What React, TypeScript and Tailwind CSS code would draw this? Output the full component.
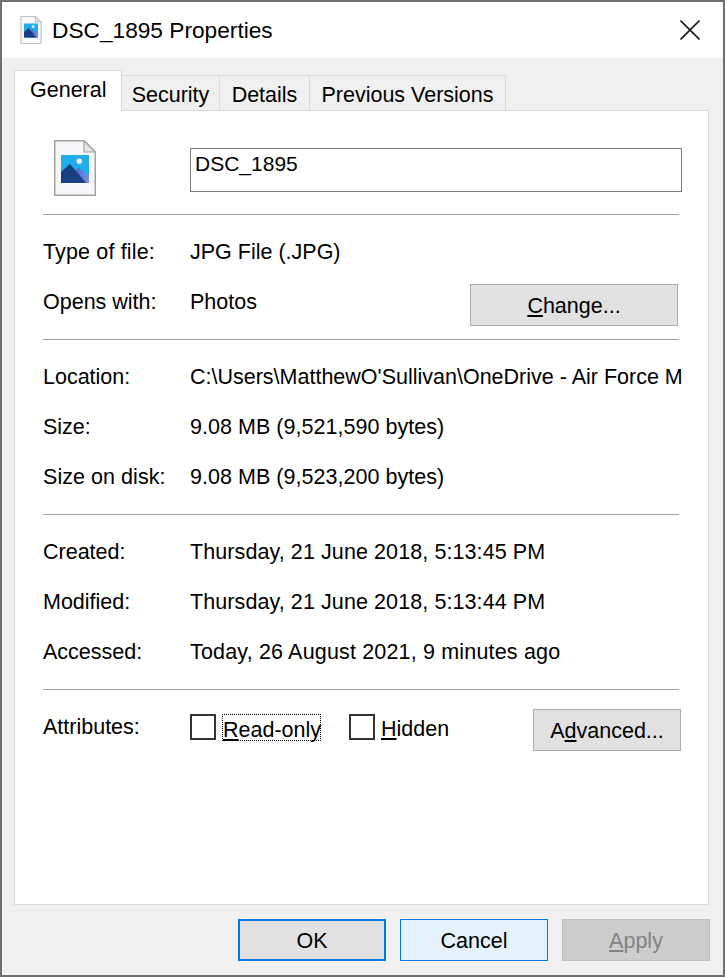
import type { ReactNode } from 'react';

const rowLabel = 'w-[147px] shrink-0';

function FileIcon({ className }: { className: string }) {
  return (
    <svg viewBox="0 0 42 56" className={className}>
      <defs>
        <linearGradient id="backHill" x1="0" y1="0" x2="1" y2="0">
          <stop offset="0" stopColor="#3f63c0" />
          <stop offset="1" stopColor="#7d8fe6" />
        </linearGradient>
      </defs>
      <path d="M0.75 0.75H30L41.25 12V55.25H0.75Z" fill="#f5f7fa" stroke="#a3a3a3" strokeWidth="1.5" />
      <path d="M30 0.75V12H41.25Z" fill="#e4e4e4" stroke="#a3a3a3" strokeWidth="1.2" />
      <rect x="7" y="15" width="28" height="28" fill="#22ace9" />
      <circle cx="25.3" cy="21.3" r="2.7" fill="#e8f4fc" />
      <path d="M19 33L24 28L35 35.5V43H19Z" fill="url(#backHill)" />
      <path d="M7 32L16 24L32 43H7Z" fill="#173f82" />
    </svg>
  );
}

function Row({ label, children, tracking = '', labelTracking = '' }: { label: string; children: ReactNode; tracking?: string; labelTracking?: string }) {
  return (
    <div className="flex h-[50px] items-center">
      <div className={`${rowLabel} ${labelTracking}`}>{label}</div>
      <div className={`w-[492px] overflow-hidden whitespace-nowrap ${tracking}`}>{children}</div>
    </div>
  );
}

function Divider() {
  return <div className="h-px w-[636px] bg-[#a0a0a0]" />;
}

function Tab({ label, active, width }: { label: string; active?: boolean; width: string }) {
  return (
    <div
      className={
        active
          ? `${width} h-[41px] -mb-px z-10 border border-b-0 border-[#d9d9d9] bg-white pl-[15px] pt-[4px] leading-[31px]`
          : `${width} h-[35px] border border-l-0 border-b-0 border-[#d9d9d9] bg-[#f0f0f0] text-center leading-[38px]`
      }
    >
      {label}
    </div>
  );
}

function Checkbox({ children, focused }: { children: ReactNode; focused?: boolean }) {
  return (
    <div className="flex items-center">
      <div className="h-[26px] w-[26px] border-2 border-[#333333] bg-white" />
      <div className={focused ? 'ml-[6px] h-[27px] w-[99px] whitespace-nowrap border border-dotted border-black leading-[30px]' : 'ml-[6px] h-[27px] leading-[31px]'}>
        {children}
      </div>
    </div>
  );
}

export default function App() {
  return (
    <div
      className="flex h-[977px] w-[725px] flex-col border-2 border-[#6f6f6f] bg-white text-[21.5px] text-black"
      style={{ fontFamily: '"Liberation Sans", Arial, sans-serif' }}
    >
      {/* Title bar */}
      <div className="flex h-[56px] shrink-0 items-center pl-[18px] pr-[23px]">
        <FileIcon className="h-[28px] w-[22px]" />
        <div className="ml-[10px] text-[22.7px]">DSC_1895 Properties</div>
        <svg viewBox="0 0 20 20" className="ml-auto h-[20px] w-[20px]">
          <path d="M0.5 0.5L19.5 19.5M19.5 0.5L0.5 19.5" stroke="#1a1a1a" strokeWidth="1.6" />
        </svg>
      </div>

      <div className="flex flex-1 flex-col bg-[#f0f0f0] px-[12px]">
        {/* Tabs */}
        <div className="flex h-[52px] shrink-0 items-end">
          <Tab label="General" active width="w-[108px]" />
          <Tab label="Security" width="w-[98px]" />
          <Tab label="Details" width="w-[90px]" />
          <Tab label="Previous Versions" width="w-[196px]" />
        </div>

        {/* General panel */}
        <div className="h-[795px] w-[695px] border border-[#d9d9d9] bg-white pl-[28px] pt-[29px]">
          <div className="flex h-[56px] items-start">
            <FileIcon className="ml-[11px] h-[56px] w-[42px]" />
            <div className="ml-[94px] mt-[8px] h-[44px] w-[492px] border border-[#7a7a7a] pl-[4px] text-[21px] leading-[30px]">DSC_1895</div>
          </div>
          <div className="mt-[18px]"><Divider /></div>

          <div className="mt-[12px]">
            <Row label="Type of file:" labelTracking="tracking-[0.15px]">JPG File (.JPG)</Row>
            <div className="flex h-[50px] items-center">
              <div className={rowLabel}>Opens with:</div>
              <div className="w-[280px]">Photos</div>
              <button className="mt-[6px] h-[42px] w-[208px] border border-[#adadad] bg-[#e1e1e1] pt-[2px]">
                <u>C</u>hange...
              </button>
            </div>
          </div>
          <div className="mt-[12px]"><Divider /></div>

          <div className="mt-[12px]">
            <Row label="Location:">C:\Users\MatthewO'Sullivan\OneDrive - Air Force Medical</Row>
            <Row label="Size:" tracking="tracking-[0.03px]">9.08 MB (9,521,590 bytes)</Row>
            <Row label="Size on disk:" labelTracking="tracking-[0.05px]" tracking="tracking-[0.03px]">9.08 MB (9,523,200 bytes)</Row>
          </div>
          <div className="mt-[12px]"><Divider /></div>

          <div className="mt-[12px]">
            <Row label="Created:" tracking="tracking-[0.09px]">Thursday, 21 June 2018, 5:13:45 PM</Row>
            <Row label="Modified:" tracking="tracking-[0.09px]">Thursday, 21 June 2018, 5:13:44 PM</Row>
            <Row label="Accessed:" tracking="tracking-[0.17px]">Today, 26 August 2021, 9 minutes ago</Row>
          </div>
          <div className="mt-[12px]"><Divider /></div>

          <div className="mt-[12px] flex h-[50px] items-center">
            <div className={rowLabel}>Attributes:</div>
            <Checkbox focused><u>R</u>ead-only</Checkbox>
            <div className="ml-[28px]">
              <Checkbox><u>H</u>idden</Checkbox>
            </div>
            <button className="ml-auto mr-[27px] mt-[6px] h-[42px] w-[148px] border border-[#adadad] bg-[#e1e1e1] pt-[2px]">
              A<u>d</u>vanced...
            </button>
          </div>
        </div>

        {/* Footer buttons */}
        <div className="mt-[14px] flex gap-[14px] pl-[224px]">
          <button className="h-[42px] w-[148px] border-2 border-[#0078d7] bg-[#e1e1e1] pt-[2px]">OK</button>
          <button className="h-[42px] w-[148px] border border-[#0078d7] bg-[#e5f1fb] pt-[2px]">Cancel</button>
          <button className="h-[42px] w-[148px] border border-[#bfbfbf] bg-[#cccccc] pt-[2px] text-[#838383]">
            <u>A</u>pply
          </button>
        </div>
      </div>
    </div>
  );
}
